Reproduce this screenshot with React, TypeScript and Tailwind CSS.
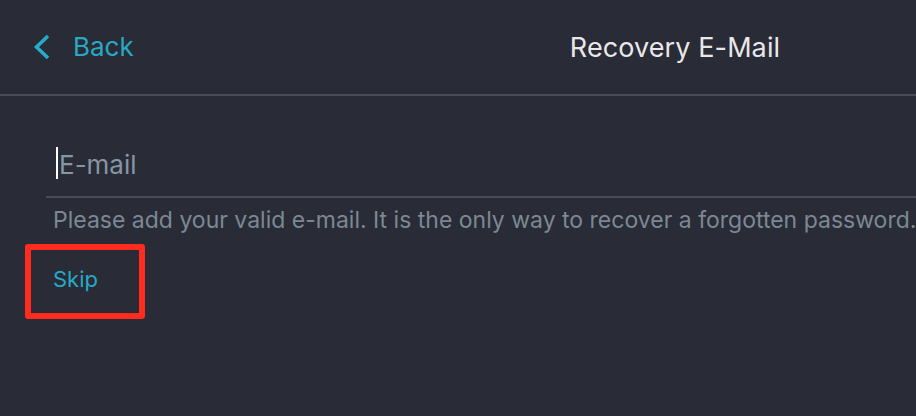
import React from "react";

export default function App() {
  return (
    <div
      className="w-[916px] h-[416px] overflow-hidden bg-[#292b36]"
      style={{ fontFamily: "Inter, 'Noto Sans', sans-serif" }}
    >
      <div className="w-[1350px] h-[96px] border-b-2 border-[#4a4b57] grid grid-cols-[1fr_auto_1fr] items-center">
        <div className="flex items-center pl-[33px]">
          <svg width="18" height="26" viewBox="0 0 18 26" className="block">
            <path d="M15 2 L3.5 13 L15 24" fill="none" stroke="#22aecb" strokeWidth="3.6" />
          </svg>
          <span className="ml-[22px] text-[26px] leading-none text-[#27a9c5]">Back</span>
        </div>
        <div className="text-[27px] tracking-[0.1px] leading-none text-[#e8e8ea]">Recovery E-Mail</div>
        <div />
      </div>
      <div className="pl-[46px]">
        <div className="h-[102px] border-b-2 border-[#4a4b57] flex items-center pl-[10px] pt-[33px]">
          <div className="w-[2px] h-[32px] bg-white" />
          <span className="ml-[1px] mt-[5px] text-[26px] leading-none text-[#8596a4]">E-mail</span>
        </div>
        <div className="pl-[7px] pt-[8px] text-[23px] leading-[28px] text-[#7c8893] whitespace-nowrap">
          Please add your valid e-mail. It is the only way to recover a forgotten password.
        </div>
      </div>
      <div className="ml-[25px] mt-[10px] w-[120px] h-[75px] border-[6px] border-[#ff2b1e] rounded-[3px] flex items-center pl-[22px] pb-[6px]">
        <span className="text-[22px] leading-none text-[#27a9c5]">Skip</span>
      </div>
    </div>
  );
}
